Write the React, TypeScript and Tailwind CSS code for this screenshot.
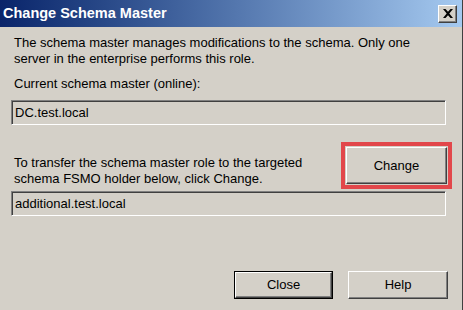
import React from 'react';

const raised =
  'border border-t-white border-l-white border-r-[#404040] border-b-[#404040] shadow-[inset_-1px_-1px_0_#808080] bg-[#d4d0c8]';
const sunken =
  'border border-t-[#808080] border-l-[#808080] border-r-white border-b-white shadow-[inset_1px_1px_0_#404040] bg-[#d4d0c8]';

function Field({ value }: { value: string }) {
  return (
    <div className={`h-[25px] w-[435px] ml-[11px] flex items-center pl-[3px] ${sunken}`}>
      <span className="text-[13px] leading-none text-black">{value}</span>
    </div>
  );
}

export default function App() {
  return (
    <div
      className="w-[463px] h-[310px] overflow-hidden flex flex-col bg-[#d4d0c8] border-r border-r-[#404040]"
      style={{ fontFamily: '"Liberation Sans", Arial, sans-serif' }}
    >
      {/* Title bar */}
      <div className="h-[27px] shrink-0 flex items-center justify-between pl-[3px] pr-[5px] bg-gradient-to-r from-[#0a246a] to-[#a6caf0]">
        <span className="text-white font-bold text-[14.5px] leading-none">
          Change Schema Master
        </span>
        <div className={`w-[19px] h-[18px] flex items-center justify-center ${raised}`}>
          <svg width="10" height="9" viewBox="0 0 10 9">
            <path d="M0 0h2.5l2.5 2.8L7.5 0H10L6.3 4.5 10 9H7.5L5 6.2 2.5 9H0l3.7-4.5z" fill="#000" />
          </svg>
        </div>
      </div>

      {/* Body */}
      <div className="flex-1 flex flex-col text-[13px] leading-[16px] text-black">
        <p className="mt-[8px] ml-[14px]">
          The schema master manages modifications to the schema. Only one
          <br />
          server in the enterprise performs this role.
        </p>
        <p className="mt-[9px] ml-[14px]">Current schema master (online):</p>
        <div className="mt-[8px]">
          <Field value="DC.test.local" />
        </div>

        <div className="mt-[17px] flex items-center">
          <p className="ml-[14px] w-[327px] mt-[10px]">
            To transfer the schema master role to the targeted
            <br />
            schema FSMO holder below, click Change.
          </p>
          <div className="border-[4px] border-[#e2474b] p-[1px] w-[111px] h-[47px] flex">
            <button className={`flex-1 text-[13px] text-black ${raised}`}>Change</button>
          </div>
        </div>

        <div className="mt-[2px]">
          <Field value="additional.test.local" />
        </div>

        <div className="mt-auto mb-[11px] flex justify-end gap-[15px] pr-[14px]">
          <div className="border border-black w-[99px] h-[28px] flex">
            <button className={`flex-1 text-[13px] text-black ${raised}`}>Close</button>
          </div>
          <button className={`w-[100px] h-[28px] text-[13px] text-black ${raised}`}>Help</button>
        </div>
      </div>
    </div>
  );
}
